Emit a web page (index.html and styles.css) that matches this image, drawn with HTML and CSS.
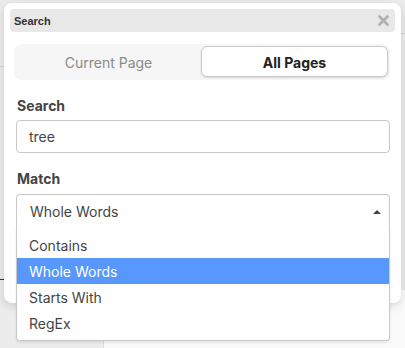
FILE: index.html
```html
<!DOCTYPE html>
<html>
<head>
<meta charset="utf-8">
<link rel="stylesheet" href="styles.css">
</head>
<body>
<div class="backdrop">
  <div class="bg-panel"></div>
  <div class="bg-line bg-line-a"></div>
  <div class="bg-line bg-line-b"></div>
  <div class="bg-line bg-line-c"></div>
</div>
<div class="dialog">
  <div class="titlebar">
    <span class="title">Search</span>
    <svg class="close" width="11" height="11" viewBox="0 0 11 11"><path d="M1.5 1.5 L9.5 9.5 M9.5 1.5 L1.5 9.5" stroke="#b0b0b0" stroke-width="2.6" stroke-linecap="round"/></svg>
  </div>
  <div class="segmented">
    <div class="seg">Current Page</div>
    <div class="seg active">All Pages</div>
  </div>
  <div class="form">
    <div class="label">Search</div>
    <div class="input">tree</div>
    <div class="label label-match">Match</div>
    <div class="select">
      <div class="select-display">
        <span>Whole Words</span>
        <svg class="caret" width="8" height="4" viewBox="0 0 8 4"><path d="M0 4 L4 0 L8 4 Z" fill="#444"/></svg>
      </div>
      <div class="dropdown">
        <div class="opt">Contains</div>
        <div class="opt hl">Whole Words</div>
        <div class="opt">Starts With</div>
        <div class="opt">RegEx</div>
      </div>
    </div>
  </div>
</div>
</body>
</html>
```

FILE: styles.css
```css
html, body {
  margin: 0;
  padding: 0;
}
body {
  width: 405px;
  height: 348px;
  background: #ececec;
  font-family: Inter, "Noto Sans", sans-serif;
  position: relative;
  overflow: hidden;
}
.backdrop {
  position: absolute;
  inset: 0;
}
.bg-panel {
  position: absolute;
  left: 103px;
  top: 290px;
  right: 0;
  bottom: 0;
  background: #fafafa;
  border-left: 1px solid #dcdcdc;
}
.bg-line {
  position: absolute;
  height: 1px;
}
.bg-line-a {
  left: 0;
  width: 4px;
  top: 66px;
  background: #d4d4d4;
}
.bg-line-b {
  left: 0;
  width: 4px;
  top: 279px;
  background: #333;
}
.bg-line-c {
  right: 0;
  width: 4px;
  top: 33px;
  background: #d4d4d4;
}
.dialog {
  position: absolute;
  left: 4px;
  top: 3px;
  width: 397px;
  height: 300px;
  box-sizing: border-box;
  background: #fff;
  border-radius: 8px;
  box-shadow: 0 3px 10px rgba(0,0,0,0.14);
  padding: 6px 6px 0 6px;
}
.titlebar {
  height: 23px;
  background: #e8e8e8;
  border-radius: 4px;
  display: flex;
  align-items: center;
  justify-content: space-between;
  padding: 0 6px 0 4px;
}
.title {
  font-size: 11px;
  font-weight: 700;
  color: #333;
  font-family: "Liberation Sans", Arial, sans-serif;
}
.close {
  display: block;
}
.segmented {
  margin: 12px 5px 0 4px;
  height: 36px;
  box-sizing: border-box;
  background: #f6f6f6;
  border-radius: 7px;
  padding: 2px;
  display: flex;
}
.seg {
  flex: 1;
  display: flex;
  align-items: center;
  justify-content: center;
  font-size: 14px;
  color: #8a8a8a;
  height: 31px;
  border-radius: 6px;
  box-sizing: border-box;
  padding-top: 1px;
}
.seg.active {
  background: #fff;
  border: 1px solid #c9c9c9;
  box-shadow: 0 1px 2px rgba(0,0,0,0.12);
  color: #222;
  font-weight: 700;
}
.form {
  padding: 0 5px 0 6px;
}
.label {
  margin-top: 17px;
  margin-bottom: 6px;
  font-size: 14px;
  line-height: 17px;
  font-weight: 700;
  color: #444;
  padding-left: 1px;
}
.label-match {
  margin-bottom: 7px;
}
.input {
  height: 33px;
  box-sizing: border-box;
  border: 1px solid #c8c8c8;
  border-radius: 4px;
  padding-left: 12px;
  display: flex;
  align-items: center;
  font-size: 14px;
  color: #444;
}
.select {
  position: relative;
}
.select-display {
  height: 34px;
  box-sizing: border-box;
  border: 1px solid #c8c8c8;
  border-bottom: none;
  border-radius: 4px 4px 0 0;
  padding: 0 8px 0 13px;
  display: flex;
  align-items: center;
  justify-content: space-between;
  font-size: 14px;
  color: #444;
  background: #fff;
}
.caret {
  display: block;
}
.dropdown {
  position: absolute;
  left: 0;
  right: 0;
  top: 34px;
  background: #fff;
  border: 1px solid #c8c8c8;
  border-top: none;
  border-radius: 0 0 4px 4px;
  padding: 4px 0 4px;
  box-shadow: 0 2px 3px rgba(0,0,0,0.08);
  z-index: 2;
}
.opt {
  height: 26px;
  display: flex;
  align-items: center;
  padding-left: 12px;
  font-size: 14px;
  color: #444;
}
.opt.hl {
  background: #5897fb;
  color: #fff;
}
```
